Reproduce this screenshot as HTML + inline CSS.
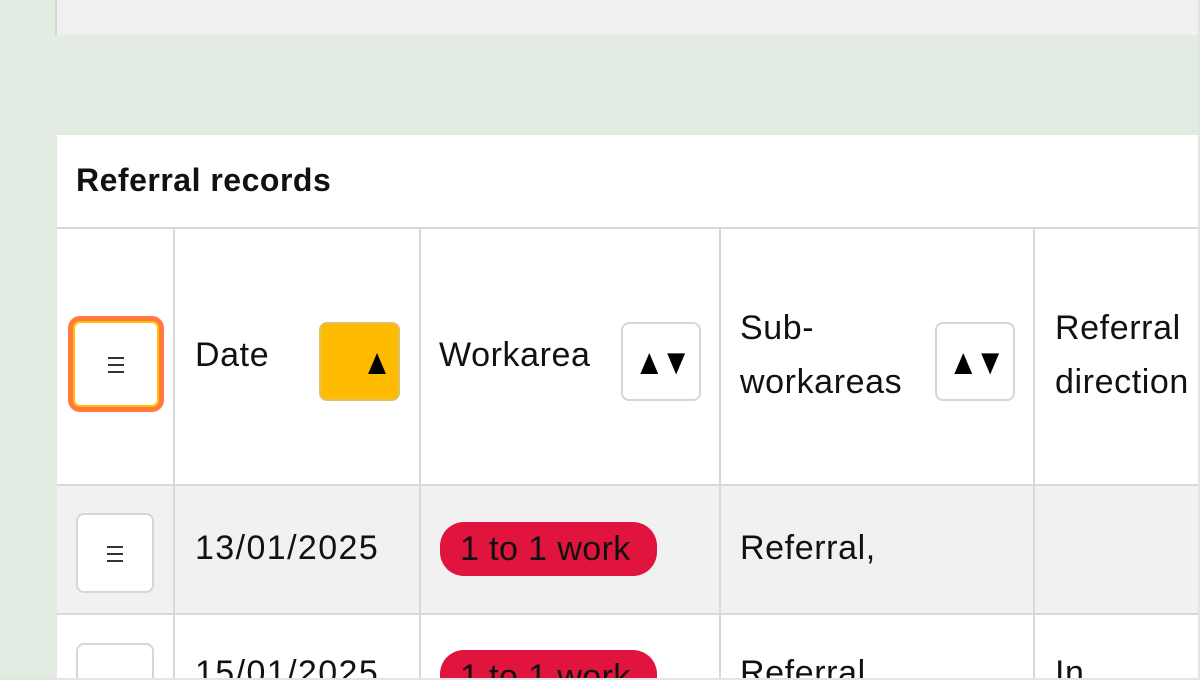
<!DOCTYPE html>
<html style="overflow:hidden;height:680px;"><head><style>
html,body{margin:0;padding:0;}
body{width:1200px;height:680px;overflow:hidden;position:relative;background:#f0f0f0;font-family:"Liberation Sans",sans-serif;color:#111;}
#w{position:absolute;left:0;top:0;width:1200px;height:680px;overflow:hidden;}
.a{position:absolute;}
.t{position:absolute;font-size:34px;white-space:nowrap;line-height:54px;letter-spacing:0.6px;}
.vl{position:absolute;width:2px;background:#d8d8d8;}
.hl{position:absolute;height:2px;background:#d8d8d8;left:57px;width:1141px;}
.btn{position:absolute;background:#fff;border:2px solid #d6d6d6;border-radius:8px;box-sizing:border-box;}
.ham{position:absolute;left:50%;top:50%;width:16px;height:16px;margin:-7px 0 0 -8px;border-top:2px solid #333;border-bottom:2px solid #333;box-sizing:border-box;}
.ham:after{content:"";position:absolute;left:0;right:0;top:5px;height:2px;background:#333;}
.arr{position:absolute;font-size:36px;line-height:76px;width:100%;text-align:center;color:#000;letter-spacing:-4px;transform:scaleX(0.85);}
.pill{position:absolute;background:#e0143c;border-radius:24px;height:54px;font-size:34px;line-height:54px;padding:0 20px;box-sizing:border-box;color:#111;white-space:nowrap;letter-spacing:0.4px;}
</style></head><body><div id="w">
<div class="a" style="left:0;top:0;width:57px;height:680px;background:#e2ece2;"></div>
<div class="a" style="left:55px;top:0;width:2px;height:35px;background:#d4d4d4;"></div>
<div class="a" style="left:57px;top:35px;width:1141px;height:100px;background:#e2ece2;"></div>
<div class="a" style="left:57px;top:135px;width:1141px;height:545px;background:#fff;"></div>
<div class="a" style="left:57px;top:485px;width:1141px;height:129px;background:#f1f1f1;"></div>
<div class="a" style="left:1198px;top:0;width:2px;height:680px;background:#e4e4e4;"></div>
<div class="a" style="left:76px;top:158px;font-size:32px;font-weight:bold;line-height:44px;letter-spacing:0.5px;">Referral records</div>
<div class="hl" style="top:227px;"></div>
<div class="hl" style="top:484px;"></div>
<div class="hl" style="top:613px;"></div>
<div class="vl" style="left:173px;top:227px;height:453px;"></div>
<div class="vl" style="left:419px;top:227px;height:453px;"></div>
<div class="vl" style="left:719px;top:227px;height:453px;"></div>
<div class="vl" style="left:1033px;top:227px;height:453px;"></div>
<div class="btn" style="left:68px;top:316px;width:96px;height:96px;border:5px solid #ff7a3c;border-radius:12px;box-shadow:inset 0 0 0 2px #ffc000;"><div class="ham"></div></div>
<div class="t" style="left:195px;top:328px;">Date</div>
<div class="btn" style="left:319px;top:322px;width:81px;height:79px;background:#ffbb00;border-color:#e0c060;"><div class="arr" style="text-align:right;padding-right:4px;box-sizing:border-box;">▲</div></div>
<div class="t" style="left:439px;top:328px;">Workarea</div>
<div class="btn" style="left:621px;top:322px;width:80px;height:79px;"><div class="arr">▲▼</div></div>
<div class="t" style="left:740px;top:301px;">Sub-<br>workareas</div>
<div class="btn" style="left:935px;top:322px;width:80px;height:79px;"><div class="arr">▲▼</div></div>
<div class="t" style="left:1055px;top:301px;">Referral<br>direction</div>
<div class="btn" style="left:76px;top:513px;width:78px;height:80px;"><div class="ham"></div></div>
<div class="t" style="left:195px;top:521px;letter-spacing:1.4px;">13/01/2025</div>
<div class="pill" style="left:440px;top:522px;width:217px;">1 to 1 work</div>
<div class="t" style="left:740px;top:521px;">Referral,</div>
<div class="btn" style="left:76px;top:643px;width:78px;height:37px;border-bottom:none;border-radius:8px 8px 0 0;"><div class="ham" style="top:40px;"></div></div>
<div class="t" style="left:195px;top:646px;letter-spacing:1.4px;">15/01/2025</div>
<div class="pill" style="left:440px;top:650px;width:217px;height:30px;border-radius:24px 24px 0 0;overflow:hidden;">1 to 1 work</div>
<div class="t" style="left:740px;top:646px;height:34px;overflow:hidden;">Referral,</div>
<div class="t" style="left:1055px;top:646px;height:34px;overflow:hidden;">In</div>
<div class="a" style="left:0;top:678px;width:1200px;height:2px;background:#e4e4e4;"></div>
</div></body></html>
